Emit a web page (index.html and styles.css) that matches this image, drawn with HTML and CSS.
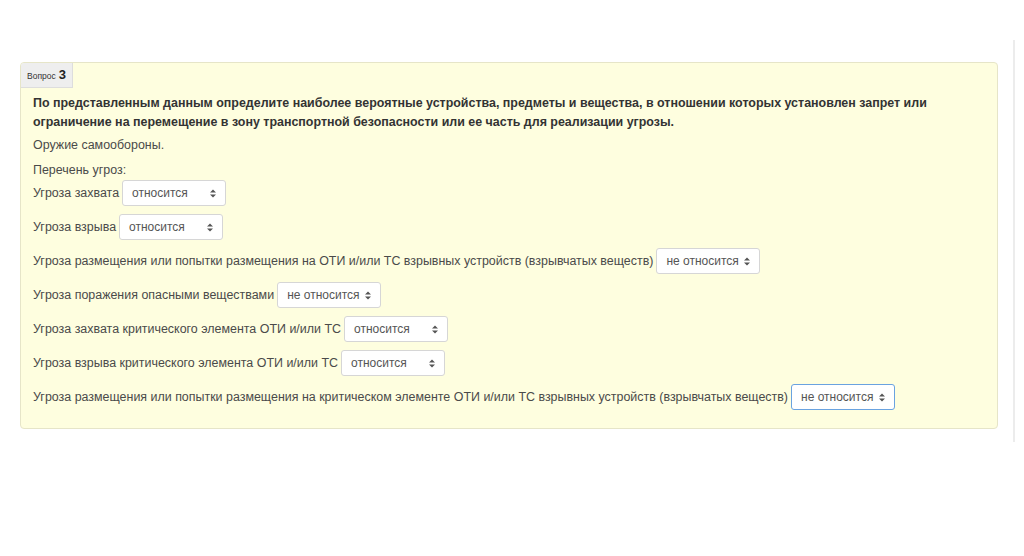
FILE: index.html
```html
<!DOCTYPE html>
<html lang="ru">
<head>
<meta charset="utf-8">
<title>Вопрос 3</title>
<link rel="stylesheet" href="styles.css">
</head>
<body>
<div class="page">
  <div class="main">
    <div class="que">
      <div class="info"><span class="qword">Вопрос</span> <span class="qno">3</span></div>
      <div class="content">
        <p class="qtext">По представленным данным определите наиболее вероятные устройства, предметы и вещества, в отношении которых установлен запрет или ограничение на перемещение в зону транспортной безопасности или ее часть для реализации угрозы.</p>
        <p class="item">Оружие самообороны.</p>
        <p class="list-title">Перечень угроз:</p>
        <div class="row"><span class="label">Угроза захвата</span><span class="select"><span class="val">относится</span><svg class="arr" width="6" height="9" viewBox="0 0 6 9"><path d="M0 3.6L3 0.4L6 3.6Z M0 5.4L3 8.6L6 5.4Z" fill="#555"/></svg></span></div>
        <div class="row"><span class="label">Угроза взрыва</span><span class="select"><span class="val">относится</span><svg class="arr" width="6" height="9" viewBox="0 0 6 9"><path d="M0 3.6L3 0.4L6 3.6Z M0 5.4L3 8.6L6 5.4Z" fill="#555"/></svg></span></div>
        <div class="row"><span class="label">Угроза размещения или попытки размещения на ОТИ и/или ТС взрывных устройств (взрывчатых веществ)</span><span class="select"><span class="val">не относится</span><svg class="arr" width="6" height="9" viewBox="0 0 6 9"><path d="M0 3.6L3 0.4L6 3.6Z M0 5.4L3 8.6L6 5.4Z" fill="#555"/></svg></span></div>
        <div class="row"><span class="label">Угроза поражения опасными веществами</span><span class="select"><span class="val">не относится</span><svg class="arr" width="6" height="9" viewBox="0 0 6 9"><path d="M0 3.6L3 0.4L6 3.6Z M0 5.4L3 8.6L6 5.4Z" fill="#555"/></svg></span></div>
        <div class="row"><span class="label">Угроза захвата критического элемента ОТИ и/или ТС</span><span class="select"><span class="val">относится</span><svg class="arr" width="6" height="9" viewBox="0 0 6 9"><path d="M0 3.6L3 0.4L6 3.6Z M0 5.4L3 8.6L6 5.4Z" fill="#555"/></svg></span></div>
        <div class="row"><span class="label">Угроза взрыва критического элемента ОТИ и/или ТС</span><span class="select"><span class="val">относится</span><svg class="arr" width="6" height="9" viewBox="0 0 6 9"><path d="M0 3.6L3 0.4L6 3.6Z M0 5.4L3 8.6L6 5.4Z" fill="#555"/></svg></span></div>
        <div class="row"><span class="label">Угроза размещения или попытки размещения на критическом элементе ОТИ и/или ТС взрывных устройств (взрывчатых веществ)</span><span class="select focus"><span class="val">не относится</span><svg class="arr" width="6" height="9" viewBox="0 0 6 9"><path d="M0 3.6L3 0.4L6 3.6Z M0 5.4L3 8.6L6 5.4Z" fill="#555"/></svg></span></div>
      </div>
    </div>
  </div>
  <div class="divider"></div>
</div>
</body>
</html>
```

FILE: styles.css
```css
html, body {
  margin: 0;
  padding: 0;
  background: #fff;
}
body {
  font-family: "Liberation Sans", Arial, sans-serif;
  color: #4a4a4a;
  font-size: 12.45px;
}
.page {
  display: flex;
  align-items: flex-start;
  padding: 40px 0 0 20px;
  height: 556px;
  box-sizing: border-box;
}
.main {
  width: 978px;
  padding-top: 22px;
}
.que {
  background: #fefedf;
  border: 1px solid #e6e5c8;
  border-radius: 4px;
  padding-bottom: 10px;
}
.info {
  display: inline-flex;
  align-items: baseline;
  gap: 3px;
  height: 25px;
  box-sizing: border-box;
  padding: 4px 6px 0 6px;
  background: #eeeeee;
  border-right: 1px solid #dddddd;
  border-bottom: 1px solid #dddddd;
  border-top-left-radius: 3px;
}
.qword {
  font-size: 8.5px;
  color: #333;
}
.qno {
  font-size: 13px;
  font-weight: bold;
  color: #222;
}
.content {
  padding: 6px 12px 0 12px;
}
p {
  margin: 0;
  line-height: 19px;
}
.qtext {
  font-weight: bold;
  color: #333;
  margin-bottom: 4px;
}
.item {
  margin-bottom: 6px;
}
.row {
  display: flex;
  align-items: center;
  gap: 3px;
  height: 26px;
  margin-bottom: 8px;
  white-space: nowrap;
}
.select {
  display: inline-flex;
  align-items: center;
  justify-content: space-between;
  width: 104px;
  height: 26px;
  box-sizing: border-box;
  padding: 0 9px 0 9px;
  background: #fff;
  border: 1px solid #d6d6d6;
  border-radius: 3px;
  font-size: 12px;
  color: #555;
}
.select.focus {
  border-color: #6aa3e0;
}
.arr {
  flex: none;
}
.divider {
  margin-left: 15px;
  width: 2px;
  height: 402px;
  background: #ececec;
}
```
